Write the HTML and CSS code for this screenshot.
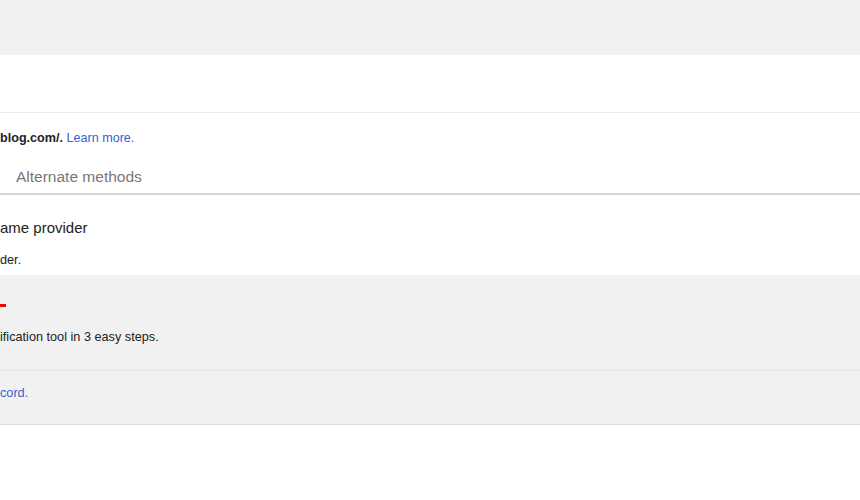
FILE: index.html
```html
<!DOCTYPE html>
<html>
<head>
<meta charset="utf-8">
<link rel="stylesheet" href="styles.css">
</head>
<body>
<div class="topbar"></div>
<div class="header"></div>
<div class="intro">
  <p class="lead"><b>blog.com/.</b> <a class="link" href="#">Learn more.</a></p>
  <div class="tabs"><span class="tab">Alternate methods</span></div>
</div>
<div class="method first">
  <h2 class="m-title">ame provider</h2>
  <p class="m-desc">der.</p>
</div>
<div class="method gray">
  <div class="dash"></div>
  <p class="m-desc steps">ification tool in 3 easy steps.</p>
</div>
<div class="method gray last">
  <a class="link m-desc" href="#">cord.</a>
</div>
</body>
</html>
```
FILE: styles.css
```css
html, body {
  margin: 0;
  padding: 0;
  background: #fff;
  font-family: Arial, "Liberation Sans", sans-serif;
  color: #222;
}
.topbar {
  height: 55px;
  background: #f1f1f1;
}
.header {
  height: 57px;
  border-bottom: 1px solid #ebebeb;
}
.intro {
  padding-top: 17px;
}
.lead {
  margin: 0;
  font-size: 12.6px;
  line-height: 16px;
  white-space: nowrap;
}
.lead b {
  font-weight: bold;
  color: #222;
}
.link {
  color: #3a5fd3;
  text-decoration: none;
}
.tabs {
  margin-top: 21px;
  padding: 0 0 6px 16px;
  border-bottom: 2px solid #d6d6d6;
}
.tab {
  display: block;
  font-size: 15.5px;
  line-height: 20px;
  color: #777;
}
.method {
  white-space: nowrap;
}
.method.first {
  padding: 23px 0 7px 0;
}
.m-title {
  margin: 0;
  font-size: 15px;
  line-height: 20px;
  font-weight: normal;
  color: #222;
}
.m-desc {
  margin: 14px 0 0 0;
  font-size: 12.7px;
  line-height: 16px;
  color: #222;
}
.method.gray {
  background: #f1f1f1;
  border-bottom: 1px solid #e4e4e4;
  padding: 29px 0 25px 0;
}
.dash {
  width: 6px;
  height: 3px;
  background: #f00;
}
.method.gray .steps {
  margin-top: 22px;
}
.method.last {
  padding: 14px 0 23px 0;
  border-bottom-color: #dcdcdc;
}
.method.last .link {
  display: block;
  margin: 0;
  color: #3a5fd3;
}
```
